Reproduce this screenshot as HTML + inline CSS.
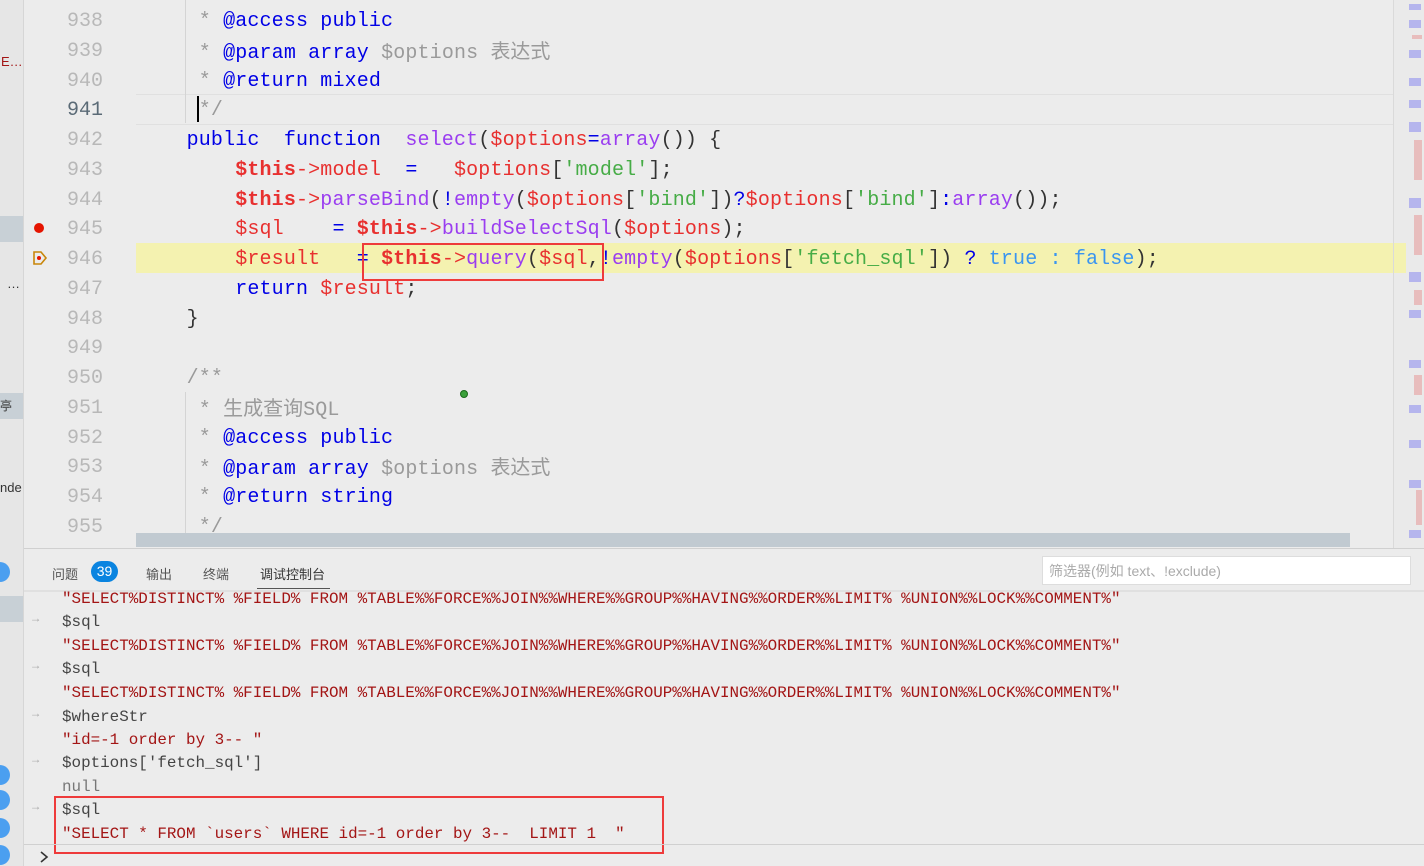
<!DOCTYPE html>
<html><head><meta charset="utf-8"><style>
body{margin:0;width:1424px;height:866px;overflow:hidden;background:#ececec;position:relative;font-family:"Liberation Mono",monospace}
.a{position:absolute}
.ln{position:absolute;left:40px;width:63px;text-align:right;font-size:20px;color:#b8b8b8;line-height:30px}
.cl{position:absolute;left:138px;font-size:20px;line-height:30px;white-space:pre;color:#333;letter-spacing:0.15px}
.k{color:#0000e6}.v{color:#e8302f}.b{color:#e8302f;font-weight:bold}.f{color:#9a3df0}.s{color:#46ac46}.c{color:#9a9a9a}.t{color:#3a95f0}
.o{position:absolute;left:62px;font-size:15.9px;line-height:23.5px;white-space:pre;color:#444}
.r{color:#a31515}
.ar{position:absolute;left:32px;font-size:12px;color:#aaa}
.ui{font-family:"Liberation Sans","Noto Sans CJK SC",sans-serif;letter-spacing:0}
</style></head><body>
<div class="a" style="left:0;top:0;width:23px;height:866px;background:#e6e6e6;border-right:1px solid #d6d6d6"></div>
<div class="a" style="left:0;top:216px;width:23px;height:26px;background:#c8d0d6"></div>
<div class="a" style="left:0;top:393px;width:23px;height:26px;background:#c8d0d6"></div>
<div class="a" style="left:0;top:596px;width:23px;height:26px;background:#c8d0d6"></div>
<div class="a ui" style="left:1px;top:54px;font-size:13px;color:#a31515">E…</div>
<div class="a ui" style="left:7px;top:276px;font-size:13px;color:#333">…</div>
<div class="a ui" style="left:0;top:397px;font-size:12px;color:#333">亭</div>
<div class="a ui" style="left:0;top:480px;font-size:13px;color:#333">nde</div>
<div class="a" style="left:-10px;top:562px;width:20px;height:20px;border-radius:50%;background:#4b9ff0"></div>
<div class="a" style="left:-10px;top:765px;width:20px;height:20px;border-radius:50%;background:#4b9ff0"></div>
<div class="a" style="left:-10px;top:790px;width:20px;height:20px;border-radius:50%;background:#4b9ff0"></div>
<div class="a" style="left:-10px;top:818px;width:20px;height:20px;border-radius:50%;background:#4b9ff0"></div>
<div class="a" style="left:-10px;top:845px;width:20px;height:20px;border-radius:50%;background:#4b9ff0"></div>

<div class="a" style="left:136px;top:94px;width:1258px;height:29px;border-top:1px solid #e0e0e0;border-bottom:1px solid #e0e0e0"></div>
<div class="a" style="left:136px;top:243px;width:1258px;height:30px;background:#f4f2b0"></div>
<div class="a" style="left:185px;top:0;width:1px;height:123px;background:#d4d4d4"></div>
<div class="a" style="left:185px;top:392px;width:1px;height:150px;background:#d4d4d4"></div>
<div class="a" style="left:197px;top:96px;width:2px;height:26px;background:#000"></div>

<div class="ln" style="top:7px">938</div><div class="ln" style="top:37px">939</div><div class="ln" style="top:67px">940</div><div class="ln" style="top:96px;color:#5a6a76">941</div><div class="ln" style="top:126px">942</div><div class="ln" style="top:156px">943</div><div class="ln" style="top:186px">944</div><div class="ln" style="top:215px">945</div><div class="ln" style="top:245px">946</div><div class="ln" style="top:275px">947</div><div class="ln" style="top:305px">948</div><div class="ln" style="top:334px">949</div><div class="ln" style="top:364px">950</div><div class="ln" style="top:394px">951</div><div class="ln" style="top:424px">952</div><div class="ln" style="top:453px">953</div><div class="ln" style="top:483px">954</div><div class="ln" style="top:513px">955</div>
<div class="a" style="left:34px;top:223px;width:10px;height:10px;border-radius:50%;background:#e51400"></div>
<svg class="a" style="left:32px;top:250px" width="16" height="16"><path d="M2 2H9L14 8L9 14H2Z" fill="none" stroke="#c8860a" stroke-width="1.6"/><circle cx="7" cy="8" r="2" fill="#e51400"/></svg>

<div class="cl" style="top:7px"><span class="c">     * </span><span class="k">@access public</span></div>
<div class="cl" style="top:37px"><span class="c">     * </span><span class="k">@param array </span><span class="c">$options <span class="ui">表达式</span></span></div>
<div class="cl" style="top:67px"><span class="c">     * </span><span class="k">@return mixed</span></div>
<div class="cl" style="top:96px"><span class="c">     */</span></div>
<div class="cl" style="top:126px"><span class="k">    public  function  </span><span class="f">select</span>(<span class="v">$options</span><span class="k">=</span><span class="f">array</span>()) {</div>
<div class="cl" style="top:156px">        <span class="b">$this</span><span class="v">-&gt;model</span>  <span class="k">=</span>   <span class="v">$options</span>[<span class="s">'model'</span>];</div>
<div class="cl" style="top:186px">        <span class="b">$this</span><span class="v">-&gt;</span><span class="f">parseBind</span>(<span class="k">!</span><span class="f">empty</span>(<span class="v">$options</span>[<span class="s">'bind'</span>])<span class="k">?</span><span class="v">$options</span>[<span class="s">'bind'</span>]<span class="k">:</span><span class="f">array</span>());</div>
<div class="cl" style="top:215px">        <span class="v">$sql</span>    <span class="k">=</span> <span class="b">$this</span><span class="v">-&gt;</span><span class="f">buildSelectSql</span>(<span class="v">$options</span>);</div>
<div class="cl" style="top:245px">        <span class="v">$result</span>   <span class="k">=</span> <span class="b">$this</span><span class="v">-&gt;</span><span class="f">query</span>(<span class="v">$sql</span>,<span class="k">!</span><span class="f">empty</span>(<span class="v">$options</span>[<span class="s">'fetch_sql'</span>]) <span class="k">?</span> <span class="t">true</span> <span class="t">:</span> <span class="t">false</span>);</div>
<div class="cl" style="top:275px">        <span class="k">return </span><span class="v">$result</span>;</div>
<div class="cl" style="top:305px">    }</div>
<div class="cl" style="top:364px"><span class="c">    /**</span></div>
<div class="cl" style="top:394px"><span class="c">     * <span class="ui">生成查询</span>SQL</span></div>
<div class="cl" style="top:424px"><span class="c">     * </span><span class="k">@access public</span></div>
<div class="cl" style="top:453px"><span class="c">     * </span><span class="k">@param array </span><span class="c">$options <span class="ui">表达式</span></span></div>
<div class="cl" style="top:483px"><span class="c">     * </span><span class="k">@return string</span></div>
<div class="cl" style="top:513px"><span class="c">     */</span></div>
<div class="a" style="left:362px;top:243px;width:238px;height:34px;border:2px solid #ee3b3b"></div>
<div class="a" style="left:460px;top:390px;width:6px;height:6px;border-radius:50%;background:#3aa03a;border:1px solid #1a6a1a"></div>

<div class="a" style="left:1393px;top:0;width:31px;height:548px;background:#eaeaea;border-left:1px solid #dadada"></div>
<div class="a" style="left:1394px;top:243px;width:12px;height:30px;background:#f4f2b0"></div>
<svg class="a" style="left:1406px;top:0;opacity:0.55" width="18" height="548">
<g fill="#8a8af0"><rect x="3" y="4" width="12" height="6"/><rect x="3" y="20" width="12" height="8"/><rect x="3" y="50" width="12" height="8"/><rect x="3" y="78" width="12" height="8"/><rect x="3" y="100" width="12" height="8"/><rect x="3" y="122" width="12" height="10"/><rect x="3" y="198" width="12" height="10"/><rect x="3" y="272" width="12" height="10"/><rect x="3" y="310" width="12" height="8"/><rect x="3" y="360" width="12" height="8"/><rect x="3" y="405" width="12" height="8"/><rect x="3" y="440" width="12" height="8"/><rect x="3" y="480" width="12" height="8"/><rect x="3" y="530" width="12" height="8"/></g>
<g fill="#e89a9a"><rect x="6" y="35" width="10" height="4"/><rect x="8" y="140" width="8" height="40"/><rect x="8" y="215" width="8" height="40"/><rect x="8" y="290" width="8" height="15"/><rect x="8" y="375" width="8" height="20"/><rect x="10" y="490" width="6" height="35"/></g>
</svg>
<div class="a" style="left:136px;top:533px;width:1214px;height:14px;background:#c1cad1"></div>

<div class="a" style="left:24px;top:548px;width:1400px;height:1px;background:#d0d0d0"></div>
<div class="a ui" style="left:52px;top:564px;font-size:13px;color:#555">问题</div>
<div class="a ui" style="left:91px;top:561px;width:27px;height:21px;border-radius:11px;background:#0a84e0;color:#fff;font-size:14px;text-align:center;line-height:21px">39</div>
<div class="a ui" style="left:146px;top:564px;font-size:13px;color:#555">输出</div>
<div class="a ui" style="left:203px;top:564px;font-size:13px;color:#555">终端</div>
<div class="a ui" style="left:260px;top:564px;font-size:13px;color:#333">调试控制台</div>
<div class="a" style="left:257px;top:588px;width:73px;height:1px;background:#555"></div>
<div class="a ui" style="left:1042px;top:556px;width:369px;height:29px;background:#fff;border:1px solid #ddd;box-sizing:border-box;font-size:14px;color:#aaa;line-height:28px;padding-left:6px">筛选器(例如 text、!exclude)</div>
<div class="a" style="left:24px;top:590px;width:1400px;height:2px;background:#e0e0e0"></div>

<div class="o r" style="top:588px">"SELECT%DISTINCT% %FIELD% FROM %TABLE%%FORCE%%JOIN%%WHERE%%GROUP%%HAVING%%ORDER%%LIMIT% %UNION%%LOCK%%COMMENT%"</div>
<div class="ar" style="top:612px">→</div><div class="o" style="top:611px">$sql</div>
<div class="o r" style="top:635px">"SELECT%DISTINCT% %FIELD% FROM %TABLE%%FORCE%%JOIN%%WHERE%%GROUP%%HAVING%%ORDER%%LIMIT% %UNION%%LOCK%%COMMENT%"</div>
<div class="ar" style="top:659px">→</div><div class="o" style="top:658px">$sql</div>
<div class="o r" style="top:682px">"SELECT%DISTINCT% %FIELD% FROM %TABLE%%FORCE%%JOIN%%WHERE%%GROUP%%HAVING%%ORDER%%LIMIT% %UNION%%LOCK%%COMMENT%"</div>
<div class="ar" style="top:707px">→</div><div class="o" style="top:706px">$whereStr</div>
<div class="o r" style="top:729px">"id=-1 order by 3-- "</div>
<div class="ar" style="top:753px">→</div><div class="o" style="top:752px">$options['fetch_sql']</div>
<div class="o" style="top:776px;color:#777">null</div>
<div class="ar" style="top:800px">→</div><div class="o" style="top:799px">$sql</div>
<div class="o r" style="top:823px">"SELECT * FROM `users` WHERE id=-1 order by 3--  LIMIT 1  "</div>
<div class="a" style="left:54px;top:796px;width:606px;height:54px;border:2px solid #ee3b3b"></div>
<div class="a" style="left:24px;top:844px;width:1400px;height:1px;background:#d0d0d0"></div>
<svg class="a" style="left:38px;top:850px" width="12" height="14"><path d="M3 2L9 7L3 12" fill="none" stroke="#333" stroke-width="1.6"/></svg>
</body></html>
